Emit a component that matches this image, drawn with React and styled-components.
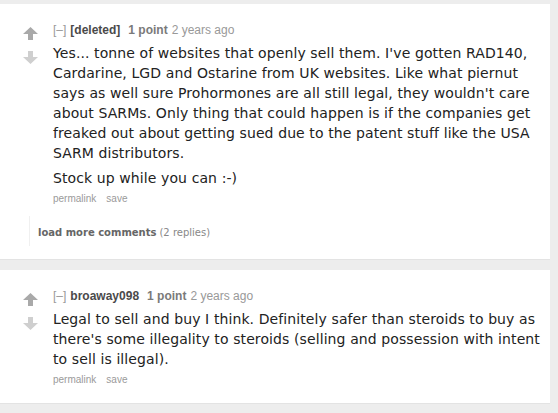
import React from "react";
import styled, { createGlobalStyle } from "styled-components";

const Global = createGlobalStyle`
  html, body { margin: 0; padding: 0; background: #ededed; }
  body { font-family: "Liberation Sans", Arial, sans-serif; }
`;

const Page = styled.div`
  padding: 4px 8px 10px 0;
  display: flex;
  flex-direction: column;
  gap: 11px;
`;

const Card = styled.div`
  background: #ffffff;
  padding: 18px 0 ${(p) => p.$bottom}px 0;
  box-shadow: 0 1px 0 #e3e3e3;
`;

const Row = styled.div`
  display: flex;
`;

const Votes = styled.div`
  width: 30px;
  padding-left: 23px;
  padding-top: 5px;
  display: flex;
  flex-direction: column;
  gap: 11px;
  flex-shrink: 0;
`;

const Entry = styled.div`
  flex: 1;
  padding-right: 4px;
  min-width: 0;
`;

const Tagline = styled.div`
  font-family: "Liberation Sans", Arial, sans-serif;
  font-size: 12px;
  line-height: 16px;
  color: #888;
  white-space: nowrap;
`;

const Expand = styled.span`
  color: #999;
  margin-right: 4px;
`;

const Author = styled.span`
  font-weight: bold;
  color: #4a4a4a;
  margin-right: 8px;
`;

const Score = styled.span`
  font-weight: bold;
  color: #7a7a7a;
  margin-right: 4px;
`;

const Time = styled.span`
  color: #999;
`;

const Body = styled.div`
  margin-top: 5px;
  font-family: "DejaVu Sans", Verdana, sans-serif;
  font-size: 14px;
  line-height: 20px;
  letter-spacing: 0.1px;
  color: #222;
`;

const P = styled.p`
  margin: 0 0 5px 0;
  &:last-child { margin-bottom: 0; }
`;

const Buttons = styled.div`
  margin: 4px 0 3px 0;
  display: flex;
  gap: 10px;
  font-family: "Liberation Sans", Arial, sans-serif;
  font-size: 10px;
  line-height: 14px;
  color: #9a9a9a;
`;

const Child = styled.div`
  margin: 7px 0 0 29px;
  border-left: 1px solid #f0f0f0;
  padding: 10px 0 6px 8px;
  font-family: "DejaVu Sans", Verdana, sans-serif;
  font-size: 10px;
  line-height: 14px;
  color: #888;
`;

const More = styled.span`
  font-weight: bold;
  color: #666;
  margin-right: 3px;
`;

const Arrow = ({ color }) => (
  <svg width="15" height="13" viewBox="0 0 15 13" style={{ display: "block" }}>
    <polygon points="7.5,0 15,7 10,7 10,13 5,13 5,7 0,7" fill={color} />
  </svg>
);

const DownArrow = ({ color }) => (
  <svg width="15" height="13" viewBox="0 0 15 13" style={{ display: "block" }}>
    <polygon points="7.5,13 15,6 10,6 10,0 5,0 5,6 0,6" fill={color} />
  </svg>
);

function Comment({ author, paragraphs }) {
  return (
    <Row>
      <Votes>
        <Arrow color="#a9a9a9" />
        <DownArrow color="#cfcfcf" />
      </Votes>
      <Entry>
        <Tagline>
          <Expand>[–]</Expand>
          <Author>{author}</Author>
          <Score>1 point</Score>
          <Time>2 years ago</Time>
        </Tagline>
        <Body>
          {paragraphs.map((t, i) => (
            <P key={i}>{t}</P>
          ))}
        </Body>
        <Buttons>
          <span>permalink</span>
          <span>save</span>
        </Buttons>
      </Entry>
    </Row>
  );
}

export default function App() {
  return (
    <>
      <Global />
      <Page>
        <Card $bottom={13}>
          <Comment
            author="[deleted]"
            paragraphs={[
              "Yes... tonne of websites that openly sell them. I've gotten RAD140, Cardarine, LGD and Ostarine from UK websites. Like what piernut says as well sure Prohormones are all still legal, they wouldn't care about SARMs. Only thing that could happen is if the companies get freaked out about getting sued due to the patent stuff like the USA SARM distributors.",
              "Stock up while you can :-)",
            ]}
          />
          <Child>
            <More>load more comments</More>(2 replies)
          </Child>
        </Card>
        <Card $bottom={13}>
          <Comment
            author="broaway098"
            paragraphs={[
              "Legal to sell and buy I think. Definitely safer than steroids to buy as there's some illegality to steroids (selling and possession with intent to sell is illegal).",
            ]}
          />
        </Card>
      </Page>
    </>
  );
}
